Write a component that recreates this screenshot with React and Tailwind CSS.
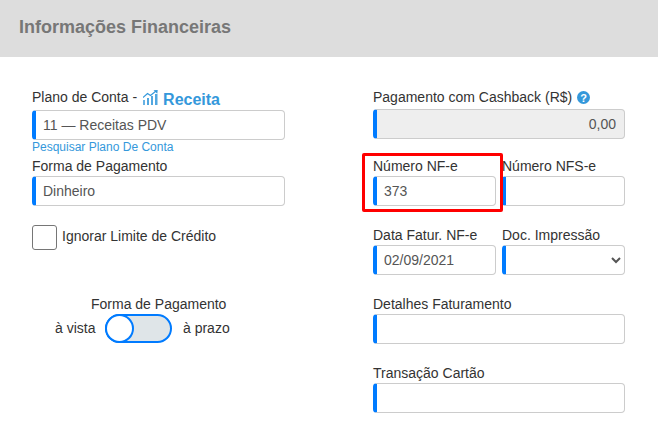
import React from "react";

const font = { fontFamily: '"Liberation Sans", Arial, sans-serif' };
const inputCls =
  "block w-full h-[30px] border border-[#ccc] border-l-4 border-l-[#007bff] rounded-[4px] bg-white pl-[7px] pr-2 text-[14px] text-[#555] outline-none";

function Field({ label, value = "", className = "" }) {
  return (
    <div className={className}>
      <div className="h-5 leading-5 text-[14px] text-[#333]">{label}</div>
      <input readOnly value={value} className={inputCls} />
    </div>
  );
}

function ChartIcon() {
  return (
    <svg width="15" height="15" viewBox="0 0 15 15" className="ml-[1px] mr-[5px] mt-[3px]" fill="#3498db">
      <rect x="0" y="10" width="2" height="5" opacity="0.75" />
      <rect x="4" y="8" width="2" height="7" opacity="0.85" />
      <rect x="8" y="6" width="2" height="9" opacity="0.85" />
      <rect x="12" y="4" width="2.5" height="11" opacity="0.85" />
      <path d="M0 7.5 L4.5 3.5 L7.5 5.5 L13 1" fill="none" stroke="#3498db" strokeWidth="1.1" />
      <path d="M10.5 0.2 L14.7 0 L14.3 3.8 Z" />
    </svg>
  );
}

export default function App() {
  return (
    <div className="w-[658px] h-[425px] bg-white overflow-hidden" style={font}>
      <div className="h-[57px] bg-[#ddd] pl-[19px] flex items-center">
        <h2 className="text-[18px] font-bold text-[#777] relative top-[-1px]">Informações Financeiras</h2>
      </div>
      <div className="flex pl-[32px] pt-[30px]">
        <div className="w-[253px]">
          <div className="h-[23px] flex items-start text-[14px] text-[#333]">
            <span className="leading-5">Plano de Conta -</span>
            <span className="ml-[5px] flex items-start text-[#3498db] font-bold text-[16px] leading-6">
              <ChartIcon /><span className="mt-[1px]">Receita</span>
            </span>
          </div>
          <input readOnly value="11 — Receitas PDV" className={inputCls} />
          <div className="text-[12px] leading-[14px] mt-[-1px] pt-[1px] pb-[1px] text-[#3498db]">Pesquisar Plano De Conta</div>
          <Field label="Forma de Pagamento" value="Dinheiro" className="mt-[1px]" />
          <label className="flex items-start mt-[19px]">
            <span className="block w-[25px] h-[25px] rounded-[3px] border border-[#767676] bg-white" />
            <span className="ml-[5px] text-[14px] leading-5 text-[#333] mt-[1px]">Ignorar Limite de Crédito</span>
          </label>
          <div className="ml-[23px] mt-[44px] w-[200px]">
            <div className="pl-[36px] text-[14px] leading-5 text-[#333]">Forma de Pagamento</div>
            <div className="flex items-center text-[14px] text-[#333]">
              <span className="w-[50px]">à vista</span>
              <span className="w-[67px] h-[29px] rounded-full border-2 border-[#007bff] bg-[#dfe5e8] flex items-center">
                <span className="block w-[29px] h-[29px] ml-[-2px] rounded-full bg-white border-2 border-[#007bff]" />
              </span>
              <span className="ml-[11px] whitespace-nowrap">à prazo</span>
            </div>
          </div>
        </div>

        <div className="w-[252px] ml-[88px] relative">
          <div className="h-[22px] flex items-start text-[14px] text-[#333]">
            <span className="leading-5">Pagamento com Cashback (R$)</span>
            <svg width="13" height="13" viewBox="0 0 13 13" className="ml-[5px] mt-[4px]">
              <circle cx="6.5" cy="6.5" r="6.5" fill="#3498db" />
              <text x="6.5" y="10.5" textAnchor="middle" fontSize="11" fontWeight="700" fill="#fff" fontFamily="Liberation Sans">?</text>
            </svg>
          </div>
          <input readOnly value="0,00" className={inputCls + " !bg-[#eee] text-right"} />
          <div className="flex gap-[6px] mt-[17px]">
            <Field label="Número NF-e" value="373" className="w-[123px]" />
            <Field label="Número NFS-e" className="w-[123px]" />
          </div>
          <div className="flex gap-[6px] mt-[19px]">
            <Field label="Data Fatur. NF-e" value="02/09/2021" className="w-[123px]" />
            <div className="w-[123px]">
              <div className="h-5 leading-5 text-[14px] text-[#333]">Doc. Impressão</div>
              <select className={inputCls + " !pl-0 !pr-0"}>
                <option></option>
              </select>
            </div>
          </div>
          <Field label="Detalhes Faturamento" className="mt-[19px]" />
          <Field label="Transação Cartão" className="mt-[19px]" />
          <div className="absolute left-[-11px] top-[66px] w-[141px] h-[59px] border-[3px] border-[#f00] rounded-[2px] pointer-events-none" />
        </div>
      </div>
    </div>
  );
}
